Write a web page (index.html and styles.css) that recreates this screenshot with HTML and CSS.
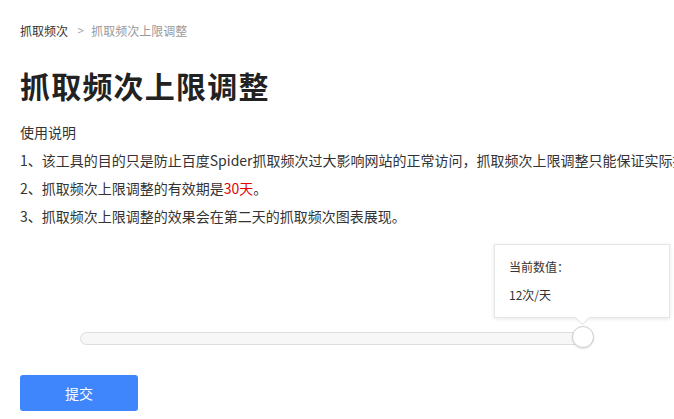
FILE: index.html
```
<!DOCTYPE html>
<html lang="zh-CN">
<head>
<meta charset="utf-8">
<title>抓取频次上限调整</title>
<link rel="stylesheet" href="styles.css">
</head>
<body>
<div class="page">
  <nav class="crumbs">
    <span class="crumb">抓取频次</span>
    <span class="sep">&gt;</span>
    <span class="crumb current">抓取频次上限调整</span>
  </nav>
  <h1 class="title">抓取频次上限调整</h1>
  <div class="notes">
    <p>使用说明</p>
    <p>1、该工具的目的只是防止百度Spider抓取频次过大影响网站的正常访问，抓取频次上限调整只能保证实际抓取频次不超过所设值。</p>
    <p>2、抓取频次上限调整的有效期是<span class="red">30天</span>。</p>
    <p>3、抓取频次上限调整的效果会在第二天的抓取频次图表展现。</p>
  </div>
  <div class="slider">
    <div class="track"></div>
    <div class="knob"></div>
    <div class="tip">
      <div class="tip-label">当前数值：</div>
      <div class="tip-value">12次/天</div>
    </div>
  </div>
  <button class="submit">提交</button>
</div>
</body>
</html>
```
FILE: styles.css
```
html, body {
  margin: 0;
  padding: 0;
  background: #fff;
  overflow: hidden;
}
body {
  font-family: "Noto Sans CJK SC", "Noto Sans", sans-serif;
  color: #333;
}
.page {
  padding: 20px 0 0 20px;
  white-space: nowrap;
}
.crumbs {
  display: flex;
  align-items: center;
  font-size: 12px;
  line-height: 22px;
  height: 22px;
}
.crumb { color: #333; }
.crumb.current { color: #999; }
.sep {
  color: #aaa;
  margin: 0 6px 0 8px;
  font-family: "DejaVu Sans", sans-serif;
  font-size: 11px;
  transform: scaleX(0.8);
}
.title {
  margin: 23px 0 0 0;
  font-size: 30px;
  line-height: 40px;
  font-weight: bold;
  color: #222;
  letter-spacing: 1.2px;
}
.notes {
  margin-top: 13px;
  font-size: 14px;
  line-height: 28px;
  overflow: hidden;
  text-overflow: clip;
}
.notes p { margin: 0; overflow: hidden; }
.red { color: #e60000; }
.slider {
  position: relative;
  margin: 96px 0 0 60px;
  width: 514px;
  height: 24px;
  display: flex;
  align-items: center;
}
.track {
  flex: 1;
  height: 11px;
  background: #f7f7f7;
  border: 1px solid #dedede;
  border-radius: 7px;
}
.knob {
  position: absolute;
  right: 0;
  top: 0;
  width: 20px;
  height: 20px;
  border: 1px solid #d0d0d0;
  border-radius: 50%;
  background: #fff;
  box-shadow: 0 1px 2px rgba(0,0,0,0.12);
}
.tip {
  position: absolute;
  left: 414px;
  bottom: 32px;
  width: 160px;
  height: 56px;
  padding: 8px 0 8px 14px;
  background: #fff;
  border: 1px solid #e6e6e6;
  box-shadow: 0 1px 4px rgba(0,0,0,0.10);
  font-size: 12px;
  line-height: 28px;
  color: #333;
}
.tip::after {
  content: "";
  position: absolute;
  left: 82px;
  bottom: -6px;
  width: 10px;
  height: 10px;
  background: #fff;
  border-right: 1px solid #e6e6e6;
  border-bottom: 1px solid #e6e6e6;
  transform: rotate(45deg);
}
.submit {
  display: block;
  margin-top: 25px;
  width: 118px;
  height: 36px;
  border: none;
  border-radius: 3px;
  background: #3f86fc;
  color: #fff;
  font-family: "Noto Sans CJK SC", sans-serif;
  font-size: 14px;
  padding: 0;
}
```
